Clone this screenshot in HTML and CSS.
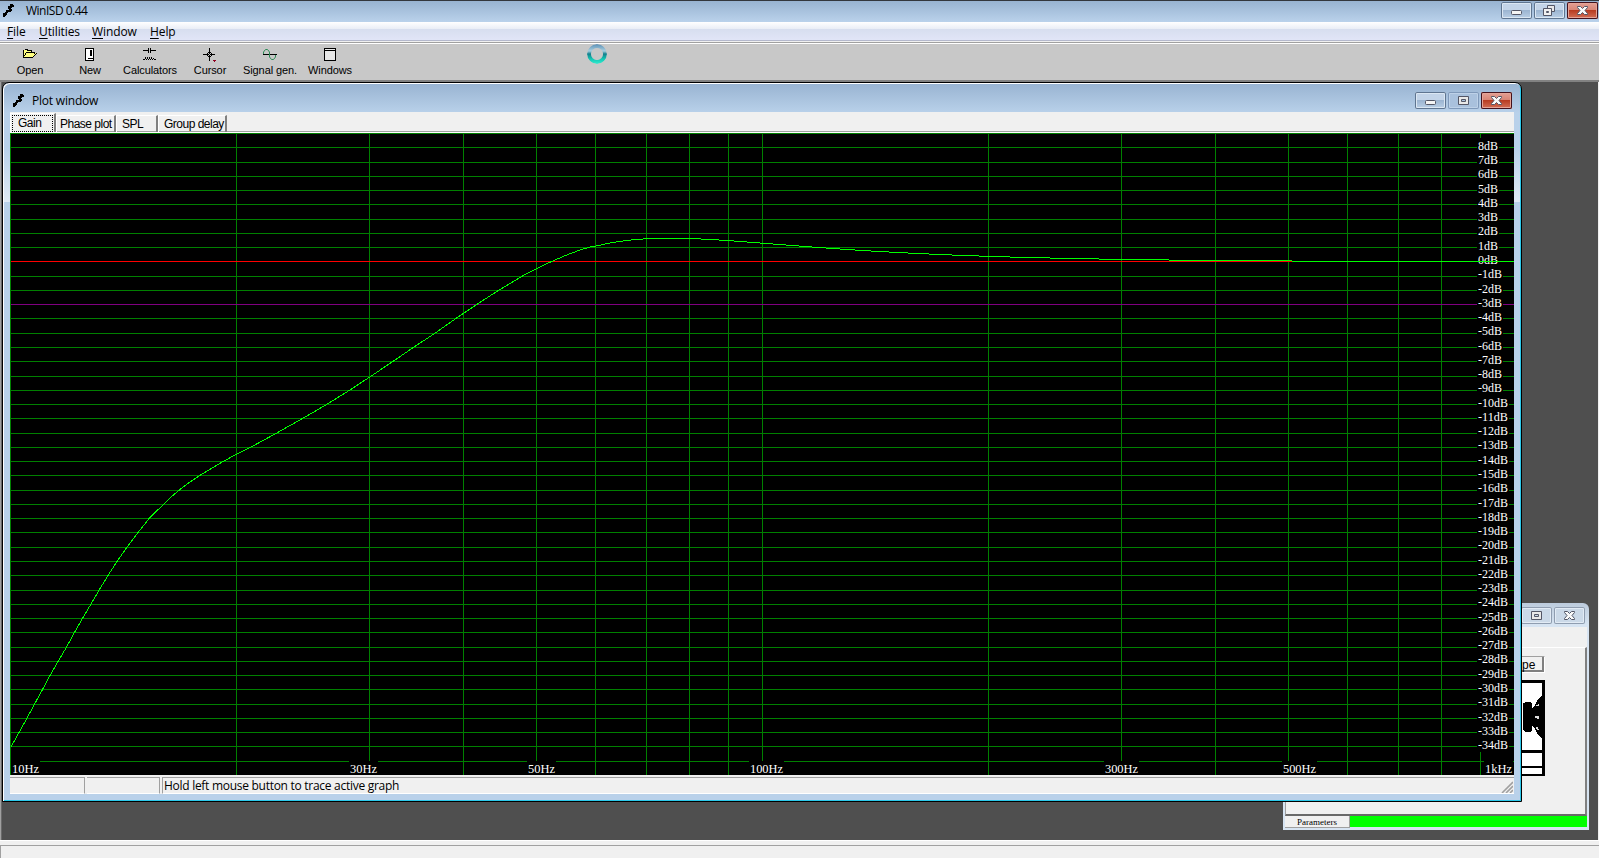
FILE: index.html
```html
<!DOCTYPE html>
<html lang="en">
<head>
    <meta charset="UTF-8">
    <title>WinISD 0.44</title>
    <link rel="stylesheet" href="styles.css">
</head>

<body>

<svg class="defs" width="0" height="0">
  <symbol id="logo" viewBox="0 0 12 13">
    <path d="M7 0h3v1h1v2h-2v1h-1v1h1v2h-1v1h-3v1h-1v2h-1v1h-1v1h-2v-1h-1v-2h1v-1h2v-1h1v-2h3v-1h-1v-3h2z"/>
  </symbol>
  <symbol id="min" viewBox="0 0 31 17">
    <rect x="10.5" y="8.5" width="10" height="4" rx="1" fill="#f4f4f4" stroke="#535666"/>
  </symbol>
  <symbol id="max" viewBox="0 0 31 17">
    <path d="M10.500 4.500h10v8h-10zM13.500 7.500h4v2h-4z" fill="#e8e8e8" stroke="#535666" fill-rule="evenodd"/>
  </symbol>
  <symbol id="restore" viewBox="0 0 31 17">
    <path d="M13.500 3.500h7v6h-7z" fill="#e8e8e8" stroke="#535666"/>
    <path d="M9.500 6.500h8v7h-8zM12.500 9.500h2v1h-2z" fill="#f0f0f0" stroke="#535666" fill-rule="evenodd"/>
  </symbol>
  <symbol id="close" viewBox="0 0 31 17">
    <path d="M10.500 4.500h3l2 2 2-2h3v1l-2.500 3 2.500 3v1h-3l-2-2-2 2h-3v-1l2.500-3-2.500-3z" fill="#fafafa" stroke="#535666"/>
  </symbol>
</svg>

<div class="app">
  <div class="title">
    <svg class="logo" width="12" height="13"><use href="#logo"/></svg>
    <span class="caption">WinISD 0.44</span>
    <div class="btns">
      <svg class="wb" width="31" height="17"><use href="#min"/></svg>
      <svg class="wb" width="31" height="17"><use href="#restore"/></svg>
      <svg class="wb red" width="31" height="17"><use href="#close"/></svg>
    </div>
  </div>

  <div class="menu">
    <span class="m1"><u>F</u>ile</span>
    <span class="m2"><u>U</u>tilities</span>
    <span class="m3"><u>W</u>indow</span>
    <span class="m4"><u>H</u>elp</span>
  </div>

  <div class="toolbar">
    <div class="tool">
      <svg width="16" height="16" shape-rendering="crispEdges">
        <path d="M2 3h1v-1h3v1h4v3h4v1l-3 4h-9z" fill="#ffff80"/>
        <path d="M2.500 2.500h3v1h4v2M1.500 3v7.500h9l4-4M1.500 10l3-4.500h8v1" fill="none" stroke="#000"/>
      </svg>
      <span>Open</span>
    </div>
    <div class="tool">
      <svg width="16" height="16" shape-rendering="crispEdges">
        <rect x="3.500" y="1.500" width="8" height="12" fill="#fff" stroke="#000"/>
        <path d="M8 3h2v6h-2zM6 11h5v1h-5z" />
      </svg>
      <span>New</span>
    </div>
    <div class="tool">
      <svg width="16" height="16" shape-rendering="crispEdges">
        <path d="M1 3.500h5M9 3.500h5M6.500 1v5M8.500 1v5M1 12.500h2M12 12.500h2M3 11.500h1M5 11.500h1M7 11.500h1M9 11.500h1M11 11.500h1M4 12.500h1M6 12.500h1M8 12.500h1M10 12.500h1M3.500 10v2M5.500 10v2M7.500 10v2M9.500 10v2" fill="none" stroke="#000"/>
      </svg>
      <span>Calculators</span>
    </div>
    <div class="tool">
      <svg width="16" height="16" shape-rendering="crispEdges">
        <path d="M1 7.500h12M7.500 1v13" stroke="#000"/>
        <path d="M5.500 5.500h4v4h-4z" fill="none" stroke="#000"/>
        <path d="M7 7h1v1h-1zM5 5h1v1h-1zM9 5h1v1h-1zM5 9h1v1h-1zM9 9h1v1h-1z" fill="#c8c8c8"/>
        <path d="M11 13h3v1h-1v1h-1v-1h-1z" fill="#900020"/>
      </svg>
      <span>Cursor</span>
    </div>
    <div class="tool">
      <svg width="16" height="16">
        <path d="M1 7.500h14" stroke="#000"/>
        <path d="M1.500 7v-2l2-2.500h2l2 2.500v5l2 2.500h2l2-2.500v-2" fill="none" stroke="#2e8b57"/>
      </svg>
      <span>Signal gen.</span>
    </div>
    <div class="tool">
      <svg width="16" height="16" shape-rendering="crispEdges">
        <rect x="2.500" y="1.500" width="11" height="12" fill="#e8e8e8" stroke="#000"/>
        <path d="M2 3.500h12" stroke="#000"/>
      </svg>
      <span>Windows</span>
    </div>
    <div class="busy"></div>
  </div>

  <div class="mdi">
    <!-- project window, mostly hidden -->
    <div class="win project">
      <div class="btns">
        <svg class="wb off" width="31" height="17"><use href="#max"/></svg>
        <svg class="wb off" width="31" height="17"><use href="#close"/></svg>
      </div>
      <div class="pagehead"></div>
      <div class="page">
        <div class="typebtn">pe</div>
        <svg width="31" height="96" shape-rendering="crispEdges">
          <path d="M0 0h31v96h-31z"/>
          <path d="M0 3h28v67h-28zM0 73h28v13h-28zM0 88h28v6h-28z" fill="#fff"/>
          <path d="M12 22h4l2 2v4l3-3 2-4 2-3 3-3v44l-3-3-2-3-2-4-3-3v4l-2 2h-5l-2-2v-27z"/>
          <path d="M22 25h2v-1h1v2h-3zM21 36h4v3h-2v-1h-2zM22 47h2v2h1v1h-2z" fill="#ddd"/>
        </svg>
      </div>
      <div class="params">
        <div class="pbtn">Parameters</div>
        <div class="green"></div>
      </div>
    </div>

    <div class="win plotwin">
      <div class="ptitle">
        <svg class="logo" width="12" height="13"><use href="#logo"/></svg>
        <span class="caption">Plot window</span>
        <div class="btns">
          <svg class="wb" width="31" height="17"><use href="#min"/></svg>
          <svg class="wb dim" width="31" height="17"><use href="#max"/></svg>
          <svg class="wb red" width="31" height="17"><use href="#close"/></svg>
        </div>
      </div>
      <div class="client">
        <div class="tabs">
          <div class="tab active"><span>Gain</span></div>
          <div class="tab t2">Phase plot</div>
          <div class="tab t3">SPL</div>
          <div class="tab t4">Group delay</div>
        </div>
        <svg id="plot" width="1504" height="642" shape-rendering="crispEdges"></svg>
        <div class="pstatus">
          <div class="cell c1"></div>
          <div class="cell c2"></div>
          <div class="cell c3">
            <span>Hold left mouse button to trace active graph</span>
            <svg width="12" height="12"><path d="M1 12L12 1M5 12L12 5M9 12L12 9" stroke="#a0a0a0" stroke-width="1.600"/></svg>
          </div>
        </div>
      </div>
    </div>
  </div>

  <div class="status"><div></div></div>
</div>

<script src="plot.js"></script>
</body>
</html>
```

FILE: plot.js
```js
var svg = document.getElementById('plot');
var html = '';
var step = 642 / 45;

function line(x1, y1, x2, y2, color) {
  html += '<path d="M' + x1 + ' ' + y1 + 'L' + x2 + ' ' + y2 + '" stroke="' + color + '"/>';
}

// text on its own black box, advance widths are whole pixels
function label(x, base, txt) {
  var w = 0;
  for (var i = 0; i < txt.length; i++) {
    var c = txt[i];
    w += c == '-' ? 4 : c == 'B' ? 8 : c == 'H' ? 9 : 6;
  }
  html += '<rect x="' + (x - 1) + '" y="' + (base - 12) + '" width="' + (w + 2) + '" height="15"/>';
  html += '<text x="' + x + '" y="' + base + '" textLength="' + w + '" lengthAdjust="spacingAndGlyphs">' + txt + '</text>';
}

// horizontal lines, one for each dB
for (var n = 0; n < 45; n++) {
  var y = Math.round(n * step) + 0.5;
  line(0, y, 1504, y, '#008000');
}

// log frequency lines
[10, 20, 30, 40, 50, 60, 70, 80, 90, 100, 200, 300, 400, 500, 600, 700, 800, 900].forEach(function(f) {
  var x = Math.round(752 * Math.log10(f / 10)) + 0.5;
  line(x, 0, x, 642, '#008000');
});
line(1, 128.5, 1504, 128.5, '#f00');
line(1, 171.5, 1504, 171.5, '#800080');

for (var n = 1; n < 44; n++) {
  label(1468, Math.round(n * step + 2.6), (9 - n) + 'dB');
}
[[2, '10Hz'], [340, '30Hz'], [518, '50Hz'], [740, '100Hz'], [1095, '300Hz'], [1273, '500Hz'], [1475, '1kHz']].forEach(function(l) {
  label(l[0], 640, l[1]);
});

// response curve, page coordinates of the plot origin are 10,133
var pts = [[11, 747], [26.5, 719], [42.5, 689.5], [50, 675.5], [58, 661.5], [66.3, 647.5], [74.3, 632.7], [82.3, 618.7],
  [90.7, 604.5], [99, 590.3], [108, 575.5], [117, 561.5], [126.7, 547.5], [138, 532.5], [149.3, 518.3], [163.3, 504.5],
  [171.7, 496.5], [180, 489.5], [190, 482], [199.3, 475.7], [210, 469.3], [222.7, 461.7], [236.3, 454.3], [251.7, 446.7],
  [276, 433.4], [302.7, 418.4], [326.7, 404.4], [349, 390.6], [369.3, 377.3], [392.7, 361.6], [413.3, 347.5],
  [434.7, 333.4], [455.7, 318.6], [476.7, 304.5], [498, 290.7], [521.7, 276.4], [536.5, 268.6], [553.3, 260.7],
  [566.7, 255], [580, 250], [591.7, 246.5]];
html += '<polyline fill="none" stroke="#0f0" points="';
pts.forEach(function(p) { html += (p[0] - 10) + ',' + (p[1] - 133) + ' '; });
html += '"/>';

var steps = [[591, 246], [596, 245], [601, 244], [605, 243], [610, 242], [616, 241], [623, 240], [631, 239], [643, 238],
  [701, 239], [719, 240], [734, 241], [747, 242], [760, 243], [773, 244], [786, 245], [799, 246], [812, 247], [826, 248],
  [840, 249], [855, 250], [871, 251], [889, 252], [908, 253], [929, 254], [952, 255], [979, 256], [1010, 257],
  [1050, 258], [1099, 259], [1169, 260], [1292, 261], [1514, 261]];
for (var i = 0; i < steps.length - 1; i++) {
  line(steps[i][0] - 10, steps[i][1] - 132.5, steps[i + 1][0] - 10, steps[i][1] - 132.5, '#0f0');
}

svg.innerHTML = html;
```

FILE: styles.css
```css
body {
    margin: 0;
    overflow: hidden;
    font-family: "Open Sans", sans-serif;
    font-size: 12px;
    color: #000;
}
.defs {
    position: absolute;
}
.app {
    width: 1599px;
    height: 858px;
    display: flex;
    flex-direction: column;
    background: #f0f0f0;
}
.title {
    box-sizing: border-box;
    height: 22px;
    border-top: 1px solid #33373d;
    background: linear-gradient(#98b3d1, #bad2eb);
    display: flex;
    padding: 1px 1px 0 3px;
}
.title .logo {
    margin-top: 2px;
}
.title .caption {
    margin-left: 11px;
    line-height: 17px;
    letter-spacing: -0.5px;
}
.btns {
    display: flex;
    gap: 2px;
    margin-left: auto;
}
.wb {
    box-sizing: border-box;
    border-radius: 2px;
    box-shadow: inset 0 0 0 1px #5f7590, inset 0 0 0 2px #dbe7f3;
    background: linear-gradient(#c3d4e8 50%, #9cb5d1 50%, #bdd2e8);
}
.wb.red {
    box-shadow: inset 0 0 0 1px #43121d, inset 0 0 0 2px #e5a497;
    background: linear-gradient(#e5a399, #d78373 50%, #b83c22 50%, #d5745c);
}
.wb.dim {
    box-shadow: inset 0 0 0 1px #7f99ba, inset 0 0 0 2px #bdd1e8;
    background: #a9c1dd;
}
.wb.off {
    box-shadow: inset 0 0 0 1px #8f9db0, inset 0 0 0 2px #e2ebf5;
    background: #cbd9e8;
}

.menu {
    box-sizing: border-box;
    height: 22px;
    display: flex;
    padding-left: 7px;
    line-height: 20px;
    letter-spacing: -0.1px;
    background: linear-gradient(#fff, #e9edf6 7px, #d7deef 7px, #e1e5f7 18px, #b4b8cc 18px, #b4b8cc 19px, #f0f0f0 19px, #f0f0f0 20px, #a0a0a0 20px, #a0a0a0 21px, #fff 21px);
}
.menu u {
    text-underline-offset: 2px;
}
.m1 { width: 32px; }
.m2 { width: 53px; }
.m3 { width: 58px; }

.toolbar {
    position: relative;
    box-sizing: border-box;
    height: 38px;
    display: flex;
    padding-top: 3px;
    background: #c8c8c8;
    border-bottom: 2px solid #828282;
}
.tool {
    width: 60px;
    display: flex;
    flex-direction: column;
    align-items: center;
    font: 11px/14px "Liberation Sans", Arial, sans-serif;
    letter-spacing: -0.1px;
    white-space: nowrap;
}
.busy {
    position: absolute;
    left: 587px;
    top: 0;
    width: 20px;
    height: 20px;
    border-radius: 50%;
    background: linear-gradient(#5b8fb5, #a8cfe0 35%, #127f8c 50%, #14c7b4 75%, #35ecd0);
    -webkit-mask: radial-gradient(circle, transparent 5.5px, #000 6.5px);
    mask: radial-gradient(circle, transparent 5.5px, #000 6.5px);
}

.mdi {
    position: relative;
    box-sizing: border-box;
    height: 758px;
    background: #4f4f4f;
    border-left: 1px solid #a0a0a0;
    border-right: 1px solid #f0f0f0;
    box-shadow: inset 1px 0 #696969;
}
.win {
    position: absolute;
    box-sizing: border-box;
    display: flex;
    flex-direction: column;
}
.plotwin {
    left: 1px;
    top: 0;
    width: 1520px;
    height: 720px;
    padding: 0 6px 6px;
    border: 1px solid #000;
    border-radius: 7px 7px 0 0;
    box-shadow: inset 1px 1px #fff, inset -1px -1px #2cc8ea;
    background: linear-gradient(#98b3d1, #b9d1ea 30px, #b9d1ea 65px, #e0eaf5 119px, #b9d1ea 119px);
}
.ptitle {
    height: 29px;
    flex: none;
    display: flex;
    padding: 0 3px 0 4px;
}
.ptitle .logo {
    margin-top: 11px;
}
.ptitle .caption {
    margin-left: 7px;
    line-height: 35px;
    letter-spacing: -0.2px;
}
.ptitle .btns {
    margin-top: 9px;
}
.client {
    width: 1504px;
    margin-left: 1px;
    background: #f0f0f0;
}
.tabs {
    box-sizing: border-box;
    height: 21px;
    display: flex;
    padding-top: 2px;
    border-bottom: 1px solid #fff;
    box-shadow: inset 0 -1px #a0a0a0;
    font: 12px/16px "Liberation Sans", Arial, sans-serif;
    letter-spacing: -0.5px;
}
.tab {
    box-sizing: border-box;
    height: 17px;
    margin-top: 1px;
    border-right: 2px solid #808080;
    border-left: 1px solid #fff;
    border-top: 1px solid #fff;
    padding-left: 3px;
    white-space: nowrap;
}
.tab.active {
    height: 19px;
    margin-top: -1px;
    width: 46px;
    padding: 1px 0 0 1px;
    background: #f0f0f0;
}
.tab.active span {
    display: block;
    box-sizing: border-box;
    width: 41px;
    height: 17px;
    padding-left: 5px;
    line-height: 14px;
    border: 1px dotted #000;
}
.t2 { width: 60px; }
.t3 { width: 42px; padding-left: 5px; }
.t4 { width: 69px; padding-left: 5px; }

#plot {
    display: block;
    background: #000;
}
#plot text {
    font: 13px "Liberation Serif", "Times New Roman", serif;
    fill: #fff;
}
.pstatus {
    box-sizing: border-box;
    height: 19px;
    padding-top: 2px;
    display: flex;
    gap: 2px;
}
.cell {
    box-sizing: border-box;
    height: 17px;
    border-top: 1px solid #a0a0a0;
    border-bottom: 1px solid #fff;
}
.c1 { width: 75px; border-right: 1px solid #a0a0a0; }
.c2 { width: 73px; border-right: 1px solid #a0a0a0; }
.c3 {
    flex: 1;
    display: flex;
    justify-content: space-between;
    padding: 0 1px 0 1px;
    border-left: 1px solid #a0a0a0;
    line-height: 16px;
    letter-spacing: -0.28px;
}
.c3 svg {
    margin-top: 3px;
}

.project {
    left: 1282px;
    top: 521px;
    width: 306px;
    height: 227px;
    padding: 4px 2px 2px;
    border-radius: 6px 6px 0 0;
    background: linear-gradient(#bccbdc, #d7e4f2 22px);
}
.project .btns {
    height: 20px;
    padding-right: 2px;
}
.pagehead {
    height: 20px;
    background: #f0f0f0;
}
.page {
    box-sizing: border-box;
    height: 169px;
    padding: 8px 0 0 228px;
    border: 1px solid #a0a0a0;
    border-top: 1px solid #fff;
    border-right: 2px solid #808080;
    border-bottom: 2px solid #696969;
    background: #f0f0f0;
}
.page svg {
    display: block;
    margin-top: 7px;
}
.typebtn {
    box-sizing: border-box;
    width: 31px;
    height: 17px;
    border: 1px solid #fff;
    border-top-color: #a0a0a0;
    box-shadow: inset -2px -2px #808080;
    font: 12px/16px "Liberation Sans", Arial, sans-serif;
    padding-left: 7px;
}
.params {
    display: flex;
    height: 12px;
}
.pbtn {
    box-sizing: border-box;
    width: 65px;
    border-right: 1px solid #a0a0a0;
    border-bottom: 1px solid #a0a0a0;
    background: #f0f0f0;
    font: 9px/13px "Liberation Serif", serif;
    text-align: center;
}
.green {
    flex: 1;
    height: 11px;
    background: #0f0;
}

.status {
    box-sizing: border-box;
    height: 18px;
    padding-top: 4px;
    background: #f0f0f0;
    border-top: 1px solid #fff;
}
.status div {
    height: 13px;
    border-top: 1px solid #a0a0a0;
    border-left: 1px solid #a0a0a0;
}
```
